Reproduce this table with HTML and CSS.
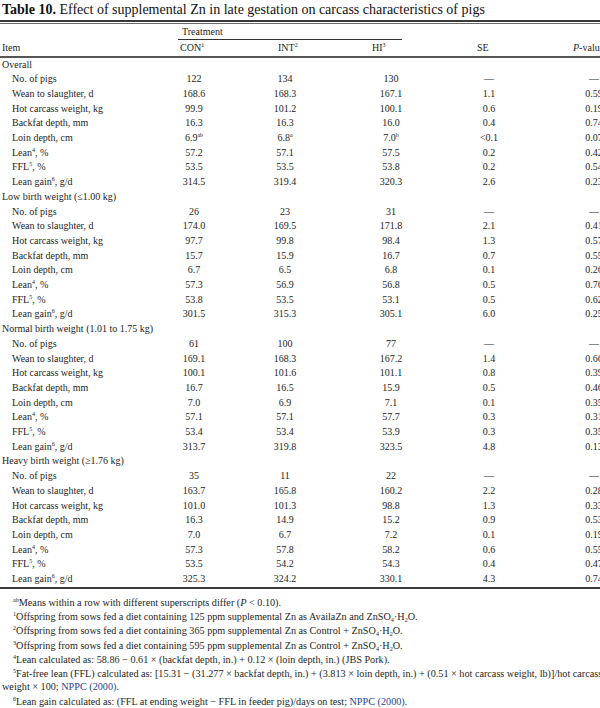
FILE: index.html
```html
<!DOCTYPE html>
<html lang="en">
<head>
<meta charset="utf-8">
<title>Table 10</title>
<link rel="stylesheet" href="styles.css">
</head>
<body>
<div class="page">
  <h1 class="title"><b>Table 10.</b> Effect of supplemental Zn in late gestation on carcass characteristics of pigs</h1>
  <div class="rule-top"></div>
  <table class="data">
    <colgroup>
      <col class="c-item"><col class="c-con"><col class="c-int"><col class="c-hi"><col class="c-se"><col class="c-p">
    </colgroup>
    <thead>
      <tr class="h1">
        <th class="item"></th>
        <th colspan="3" class="treat"><span class="treat-label">Treatment</span></th>
        <th></th><th></th>
      </tr>
      <tr class="h2">
        <th class="item">Item</th>
        <th class="hc hc-con">CON<sup>1</sup></th>
        <th class="hc hc-int">INT<sup>2</sup></th>
        <th class="hc hc-hi">HI<sup>3</sup></th>
        <th class="hc hc-se">SE</th>
        <th class="hc hc-p"><i>P</i>-value</th>
      </tr>
    </thead>
    <tbody>
      <tr class="sec"><td class="item" colspan="6">Overall</td></tr>
      <tr><td class="sub">No. of pigs</td><td>122</td><td>134</td><td>130</td><td>—</td><td class="pv">—</td></tr>
      <tr><td class="sub">Wean to slaughter, d</td><td>168.6</td><td>168.3</td><td>167.1</td><td>1.1</td><td class="pv">0.59</td></tr>
      <tr><td class="sub">Hot carcass weight, kg</td><td>99.9</td><td>101.2</td><td>100.1</td><td>0.6</td><td class="pv">0.19</td></tr>
      <tr><td class="sub">Backfat depth, mm</td><td>16.3</td><td>16.3</td><td>16.0</td><td>0.4</td><td class="pv">0.74</td></tr>
      <tr><td class="sub">Loin depth, cm</td><td>6.9<sup>ab</sup></td><td>6.8<sup>a</sup></td><td>7.0<sup>b</sup></td><td>&lt;0.1</td><td class="pv">0.07</td></tr>
      <tr><td class="sub">Lean<sup>4</sup>, %</td><td>57.2</td><td>57.1</td><td>57.5</td><td>0.2</td><td class="pv">0.42</td></tr>
      <tr><td class="sub">FFL<sup>5</sup>, %</td><td>53.5</td><td>53.5</td><td>53.8</td><td>0.2</td><td class="pv">0.54</td></tr>
      <tr><td class="sub">Lean gain<sup>6</sup>, g/d</td><td>314.5</td><td>319.4</td><td>320.3</td><td>2.6</td><td class="pv">0.23</td></tr>

      <tr class="sec"><td class="item" colspan="6">Low birth weight (≤1.00 kg)</td></tr>
      <tr><td class="sub">No. of pigs</td><td>26</td><td>23</td><td>31</td><td>—</td><td class="pv">—</td></tr>
      <tr><td class="sub">Wean to slaughter, d</td><td>174.0</td><td>169.5</td><td>171.8</td><td>2.1</td><td class="pv">0.41</td></tr>
      <tr><td class="sub">Hot carcass weight, kg</td><td>97.7</td><td>99.8</td><td>98.4</td><td>1.3</td><td class="pv">0.57</td></tr>
      <tr><td class="sub">Backfat depth, mm</td><td>15.7</td><td>15.9</td><td>16.7</td><td>0.7</td><td class="pv">0.55</td></tr>
      <tr><td class="sub">Loin depth, cm</td><td>6.7</td><td>6.5</td><td>6.8</td><td>0.1</td><td class="pv">0.26</td></tr>
      <tr><td class="sub">Lean<sup>4</sup>, %</td><td>57.3</td><td>56.9</td><td>56.8</td><td>0.5</td><td class="pv">0.76</td></tr>
      <tr><td class="sub">FFL<sup>5</sup>, %</td><td>53.8</td><td>53.5</td><td>53.1</td><td>0.5</td><td class="pv">0.62</td></tr>
      <tr><td class="sub">Lean gain<sup>6</sup>, g/d</td><td>301.5</td><td>315.3</td><td>305.1</td><td>6.0</td><td class="pv">0.25</td></tr>

      <tr class="sec"><td class="item" colspan="6">Normal birth weight (1.01 to 1.75 kg)</td></tr>
      <tr><td class="sub">No. of pigs</td><td>61</td><td>100</td><td>77</td><td>—</td><td class="pv">—</td></tr>
      <tr><td class="sub">Wean to slaughter, d</td><td>169.1</td><td>168.3</td><td>167.2</td><td>1.4</td><td class="pv">0.66</td></tr>
      <tr><td class="sub">Hot carcass weight, kg</td><td>100.1</td><td>101.6</td><td>101.1</td><td>0.8</td><td class="pv">0.39</td></tr>
      <tr><td class="sub">Backfat depth, mm</td><td>16.7</td><td>16.5</td><td>15.9</td><td>0.5</td><td class="pv">0.46</td></tr>
      <tr><td class="sub">Loin depth, cm</td><td>7.0</td><td>6.9</td><td>7.1</td><td>0.1</td><td class="pv">0.35</td></tr>
      <tr><td class="sub">Lean<sup>4</sup>, %</td><td>57.1</td><td>57.1</td><td>57.7</td><td>0.3</td><td class="pv">0.31</td></tr>
      <tr><td class="sub">FFL<sup>5</sup>, %</td><td>53.4</td><td>53.4</td><td>53.9</td><td>0.3</td><td class="pv">0.35</td></tr>
      <tr><td class="sub">Lean gain<sup>6</sup>, g/d</td><td>313.7</td><td>319.8</td><td>323.5</td><td>4.8</td><td class="pv">0.13</td></tr>

      <tr class="sec"><td class="item" colspan="6">Heavy birth weight (≥1.76 kg)</td></tr>
      <tr><td class="sub">No. of pigs</td><td>35</td><td>11</td><td>22</td><td>—</td><td class="pv">—</td></tr>
      <tr><td class="sub">Wean to slaughter, d</td><td>163.7</td><td>165.8</td><td>160.2</td><td>2.2</td><td class="pv">0.28</td></tr>
      <tr><td class="sub">Hot carcass weight, kg</td><td>101.0</td><td>101.3</td><td>98.8</td><td>1.3</td><td class="pv">0.33</td></tr>
      <tr><td class="sub">Backfat depth, mm</td><td>16.3</td><td>14.9</td><td>15.2</td><td>0.9</td><td class="pv">0.53</td></tr>
      <tr><td class="sub">Loin depth, cm</td><td>7.0</td><td>6.7</td><td>7.2</td><td>0.1</td><td class="pv">0.19</td></tr>
      <tr><td class="sub">Lean<sup>4</sup>, %</td><td>57.3</td><td>57.8</td><td>58.2</td><td>0.6</td><td class="pv">0.55</td></tr>
      <tr><td class="sub">FFL<sup>5</sup>, %</td><td>53.5</td><td>54.2</td><td>54.3</td><td>0.4</td><td class="pv">0.47</td></tr>
      <tr class="last"><td class="sub">Lean gain<sup>6</sup>, g/d</td><td>325.3</td><td>324.2</td><td>330.1</td><td>4.3</td><td class="pv">0.74</td></tr>
    </tbody>
  </table>
  <div class="notes">
    <p><sup>ab</sup>Means within a row with different superscripts differ (<i>P</i> &lt; 0.10).</p>
    <p><sup>1</sup>Offspring from sows fed a diet containing 125 ppm supplemental Zn as AvailaZn and ZnSO<sub>4</sub>·H<sub>2</sub>O.</p>
    <p><sup>2</sup>Offspring from sows fed a diet containing 365 ppm supplemental Zn as Control + ZnSO<sub>4</sub>·H<sub>2</sub>O.</p>
    <p><sup>3</sup>Offspring from sows fed a diet containing 595 ppm supplemental Zn as Control + ZnSO<sub>4</sub>·H<sub>2</sub>O.</p>
    <p><sup>4</sup>Lean calculated as: 58.86 − 0.61 × (backfat depth, in.) + 0.12 × (loin depth, in.) (JBS Pork).</p>
    <p><sup>5</sup>Fat-free lean (FFL) calculated as: [15.31 − (31.277 × backfat depth, in.) + (3.813 × loin depth, in.) + (0.51 × hot carcass weight, lb)]/hot carcass weight × 100; <a class="ref">NPPC (2000)</a>.</p>
    <p><sup>6</sup>Lean gain calculated as: (FFL at ending weight − FFL in feeder pig)/days on test; <a class="ref">NPPC (2000)</a>.</p>
  </div>
</div>
</body>
</html>
```

FILE: styles.css
```css
html, body {
  margin: 0;
  padding: 0;
  background: #ffffff;
  overflow: hidden;
}

body {
  font-family: "Liberation Serif", "Times New Roman", serif;
  color: #1e1e1e;
}

.page {
  width: 654px;
}

.title {
  margin: 0 0 2px 0;
  padding: 2px 0 0 2px;
  font-size: 14px;
  line-height: 16px;
  font-weight: normal;
  color: #111;
  white-space: nowrap;
}

.title b {
  font-weight: bold;
}

.rule-top {
  height: 1px;
  border-top: 2px solid #3a3a3a;
  border-bottom: 1px solid #6a6a6a;
}

.data {
  width: 654px;
  table-layout: fixed;
  border-collapse: separate;
  border-spacing: 0;
  font-size: 10px;
  border-bottom: 2px solid #3a3a3a;
}

.c-item { width: 150px; }
.c-con { width: 88px; }
.c-int { width: 94px; }
.c-hi { width: 118px; }
.c-se { width: 78px; }
.c-p { width: 126px; }

.data th {
  font-weight: normal;
  padding: 0;
  text-align: left;
  white-space: nowrap;
}

.h1 th {
  height: 15px;
  line-height: 15px;
  vertical-align: top;
}

.treat-label {
  display: block;
  margin: 0 48px 0 28px;
  padding-left: 4px;
  line-height: 15px;
  border-bottom: 1.3px solid #333;
}

.h2 th {
  height: 15.5px;
  line-height: 15.5px;
  border-bottom: 2px solid #555;
}

.h2 th.item { padding-left: 2px; }
.hc-con { padding-left: 30px !important; }
.hc-int { padding-left: 40px !important; }
.hc-hi { padding-left: 40px !important; }
.hc-se { padding-left: 27px !important; }
.hc-p { padding-left: 45px !important; }

.data td {
  height: 14.7px;
  line-height: 14.7px;
  padding: 0;
  text-align: center;
  white-space: nowrap;
  vertical-align: middle;
}

.data td.pv {
  padding-left: 6px;
}

.data td.item {
  text-align: left;
  padding-left: 2px;
}

.data td.sub {
  text-align: left;
  padding-left: 12px;
}

sup {
  font-size: 0.6em;
  line-height: 0;
  vertical-align: 0.6em;
}

sub {
  font-size: 0.6em;
  line-height: 0;
  vertical-align: -0.25em;
}

.notes {
  width: 618px;
  padding: 7px 0 0 2px;
  font-size: 10.2px;
  line-height: 13px;
}

.notes p {
  margin: 0 0 1.3px 0;
  text-indent: 11px;
}

.ref {
  color: #25409c;
  text-decoration: none;
}
```
